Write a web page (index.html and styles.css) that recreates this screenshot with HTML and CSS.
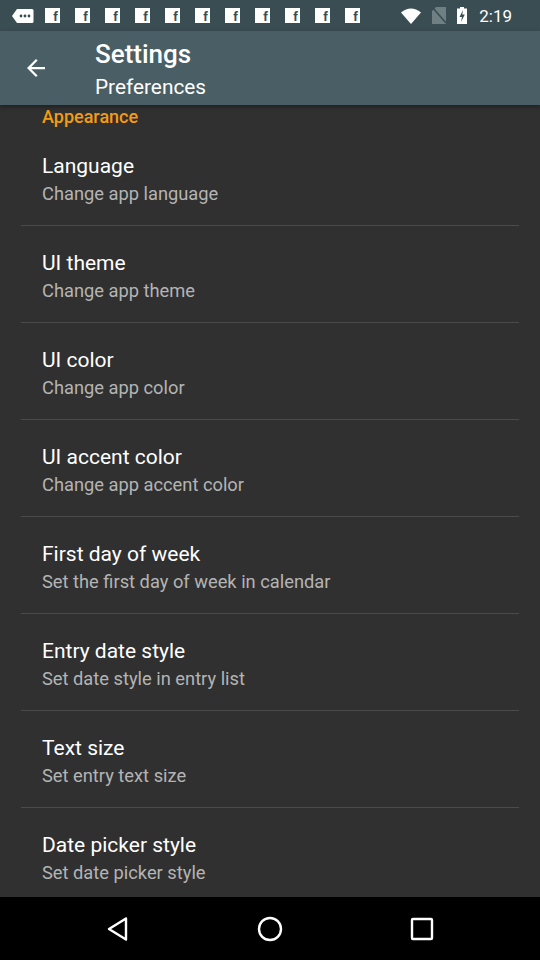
FILE: index.html
```html
<!DOCTYPE html>
<html>
<head>
<meta charset="utf-8">
<link rel="stylesheet" href="styles.css">
</head>
<body>
<div class="screen">
  <div class="statusbar">
    <div class="notifs">
      <svg class="bubble" width="22" height="16" viewBox="0 0 22 16"><path d="M5 1h15a1.5 1.5 0 0 1 1.5 1.5v11A1.5 1.5 0 0 1 20 15H5L0 8z" fill="#fff"/><circle cx="9" cy="8" r="1.4" fill="#3a4d52"/><circle cx="13" cy="8" r="1.4" fill="#3a4d52"/><circle cx="17" cy="8" r="1.4" fill="#3a4d52"/></svg>
      <span class="fb">f</span><span class="fb">f</span><span class="fb">f</span><span class="fb">f</span><span class="fb">f</span><span class="fb">f</span><span class="fb">f</span><span class="fb">f</span><span class="fb">f</span><span class="fb">f</span><span class="fb">f</span>
    </div>
    <div class="sys">
      <svg width="20" height="16" viewBox="0 0 20 16"><path d="M0 4.5Q10 -3.5 20 4.5L10 16z" fill="#fff"/></svg>
      <svg width="14" height="17" viewBox="0 0 14 17"><path d="M4 0h10v17H0V4z" fill="#6f7f83"/><path d="M1 1L14 16" stroke="#3a4d52" stroke-width="1.6"/></svg>
      <svg width="10" height="17" viewBox="0 0 10 17"><rect x="3" y="0" width="4" height="2" fill="#fff"/><rect x="0" y="1.5" width="10" height="15.5" fill="#fff"/><path d="M6 3L2.5 10h2.5L4 15l3.8-7.5H5.3z" fill="#3a4d52"/></svg>
      <span class="time">2:19</span>
    </div>
  </div>
  <div class="toolbar">
    <svg class="back" width="18" height="18" viewBox="0 0 16 16"><path d="M16 7H3.830l5.59-5.59L8 0 0 8l8 8 1.41-1.41L3.83 9H16z" fill="#fff"/></svg>
    <div class="titles">
      <div class="title">Settings</div>
      <div class="subtitle">Preferences</div>
    </div>
  </div>
  <div class="content">
    <div class="section">Appearance</div>
    <div class="item"><div class="it">Language</div><div class="is">Change app language</div></div>
    <div class="item"><div class="it">UI theme</div><div class="is">Change app theme</div></div>
    <div class="item"><div class="it">UI color</div><div class="is">Change app color</div></div>
    <div class="item"><div class="it">UI accent color</div><div class="is">Change app accent color</div></div>
    <div class="item"><div class="it">First day of week</div><div class="is">Set the first day of week in calendar</div></div>
    <div class="item"><div class="it">Entry date style</div><div class="is">Set date style in entry list</div></div>
    <div class="item"><div class="it">Text size</div><div class="is">Set entry text size</div></div>
    <div class="item last"><div class="it">Date picker style</div><div class="is">Set date picker style</div></div>
  </div>
  <div class="navbar">
    <svg width="24" height="26" viewBox="0 0 24 26"><path d="M20 2.5L3 13l17 10.5z" fill="none" stroke="#fff" stroke-width="2.4" stroke-linejoin="round"/></svg>
    <svg width="26" height="26" viewBox="0 0 26 26"><circle cx="13" cy="13" r="11" fill="none" stroke="#fff" stroke-width="2.4"/></svg>
    <svg width="24" height="24" viewBox="0 0 24 24"><rect x="2" y="2" width="20" height="20" rx="1" fill="none" stroke="#fff" stroke-width="2.4"/></svg>
  </div>
</div>
</body>
</html>
```
FILE: styles.css
```css
* { box-sizing: border-box; }
html, body { margin: 0; padding: 0; }
body { font-family: Roboto, "Noto Sans", sans-serif; background: #303030; }
.screen { width: 540px; height: 960px; display: flex; flex-direction: column; overflow: hidden; background: #303030; }
.statusbar { height: 31px; background: #3a4d52; display: flex; align-items: center; justify-content: space-between; padding: 0 28px 0 12px; }
.notifs { display: flex; align-items: center; gap: 15px; }
.notifs .bubble { margin-right: -4px; }
.fb { width: 15px; height: 15px; background: #fff; color: #3a4d52; font-weight: 700; font-size: 13px; line-height: 15px; display: flex; justify-content: flex-end; padding: 1px 2px 0 0; }
.sys { display: flex; align-items: center; gap: 11px; }
.time { color: #fff; font-size: 17px; margin-left: 1px; }
.toolbar { height: 74px; background: #4a5f65; display: flex; align-items: center; box-shadow: 0 2px 4px rgba(0,0,0,0.35); position: relative; z-index: 1; }
.back { margin-left: 27px; margin-right: 50px; }
.titles { display: flex; flex-direction: column; margin-top: 2px; }
.title { color: #fff; font-size: 26px; font-weight: 500; line-height: 30px; }
.subtitle { color: #fff; font-size: 20.8px; line-height: 24px; margin-top: 6px; }
.content { flex: 1; overflow: hidden; }
.section { color: #f39c12; font-size: 18px; font-weight: 500; line-height: 20px; padding: 2px 0 0 42px; margin-bottom: 27px; }
.item { margin: 0 21px; padding: 25px 0 0 21px; border-bottom: 1px solid #4a4a4a; height: 97px; }
.section + .item { padding-top: 0; height: 72px; }
.item.last { border-bottom: none; }
.it { color: #fff; font-size: 21px; line-height: 24px; }
.is { color: #b4b4b4; font-size: 18.3px; line-height: 20px; margin-top: 6px; }
.navbar { height: 63px; background: #000; display: flex; align-items: center; justify-content: center; gap: 127px; }
```
